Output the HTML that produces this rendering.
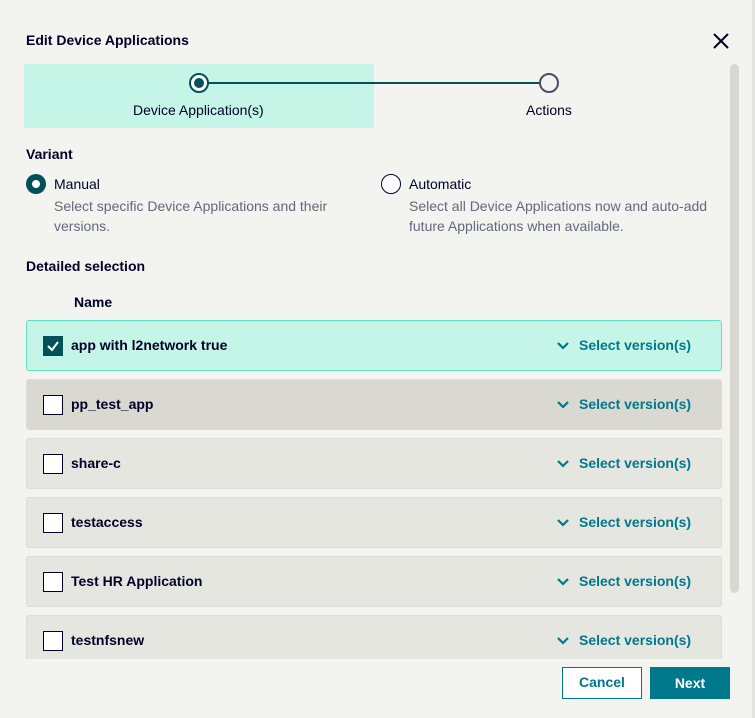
<!DOCTYPE html>
<html><head><style>
*{box-sizing:border-box;margin:0;padding:0}
body{width:755px;height:718px;background:#f3f3ef;font-family:"Liberation Sans",sans-serif;color:#000028;position:relative;overflow:hidden}
.edge{position:absolute;right:0;top:0;width:3px;height:718px;background:#e4e4e0}
.a{position:absolute}
.t{font-size:14px}
.row{position:absolute;left:26px;width:696px;height:51px;background:#e6e6e0;border:1px solid #dcdcd6;border-radius:3px}
.row .cb{position:absolute;left:16px;top:15px;width:20px;height:20px;border:1.5px solid #000028;background:#fff}
.row .n{position:absolute;left:44px;top:16px;font-size:14px;font-weight:bold;color:#000028}
.row .sv{position:absolute;left:552px;top:16px;font-size:14px;font-weight:bold;color:#00788c}
.row svg{position:absolute;left:530px;top:20px}
</style></head><body>
<div class="edge"></div>
<div class="a" style="left:26px;top:32px;font-size:14px;font-weight:bold">Edit Device Applications</div>
<svg class="a" style="left:712px;top:32px" width="18" height="18"><path d="M2 2L16 16M16 2L2 16" stroke="#000028" stroke-width="2"/></svg>
<div class="a" style="left:730px;top:64px;width:9px;height:529px;background:#d8d7d0;border-radius:5px"></div>
<div class="a" style="left:24px;top:64px;width:350px;height:64px;background:#c5f5e6"></div>
<div class="a" style="left:205px;top:82px;width:344px;height:2px;background:#005159"></div>
<div class="a" style="left:189px;top:73px;width:20px;height:20px;border-radius:50%;border:2px solid #005159;background:#fff"></div>
<div class="a" style="left:194px;top:78px;width:10px;height:10px;border-radius:50%;background:#005159"></div>
<div class="a" style="left:539px;top:73px;width:20px;height:20px;border-radius:50%;border:2px solid #4c4c68;background:#f3f3ef"></div>
<div class="a t" style="left:133px;top:102px;">Device Application(s)</div>
<div class="a t" style="left:526px;top:102px;">Actions</div>
<div class="a t" style="left:26px;top:146px;font-weight:bold">Variant</div>
<div class="a" style="left:26px;top:174px;width:20px;height:20px;border-radius:50%;background:#005159"></div>
<div class="a" style="left:32px;top:180px;width:8px;height:8px;border-radius:50%;background:#fff"></div>
<div class="a t" style="left:54px;top:176px">Manual</div>
<div class="a t" style="left:54px;top:196px;color:#66667e;line-height:20px">Select specific Device Applications and their<br>versions.</div>
<div class="a" style="left:381px;top:174px;width:20px;height:20px;border-radius:50%;border:1.5px solid #000028;background:#fff"></div>
<div class="a t" style="left:409px;top:176px">Automatic</div>
<div class="a t" style="left:409px;top:196px;color:#66667e;line-height:20px">Select all Device Applications now and auto-add<br>future Applications when available.</div>
<div class="a t" style="left:26px;top:258px;font-weight:bold">Detailed selection</div>
<div class="a t" style="left:74px;top:294px;font-weight:bold">Name</div>
<div style="position:absolute;left:0;top:0;width:755px;height:659px;overflow:hidden">
<div class="row" style="top:320px;background:#c5f5e6;border-color:#5fe2c0"><div class="cb" style="background:#005159;border-color:#005159"><svg style="left:2px;top:2px" width="14" height="14"><path d="M2 7L6 11L12 3" stroke="#fff" stroke-width="2" fill="none"/></svg></div><div class="n">app with l2network true</div><svg width="12" height="10"><path d="M1 2L6 7L11 2" stroke="#00788c" stroke-width="2.2" fill="none"/></svg><div class="sv">Select version(s)</div></div>
<div class="row" style="top:379px;background:#d9d8d1"><div class="cb"></div><div class="n">pp_test_app</div><svg width="12" height="10"><path d="M1 2L6 7L11 2" stroke="#00788c" stroke-width="2.2" fill="none"/></svg><div class="sv">Select version(s)</div></div>
<div class="row" style="top:438px"><div class="cb"></div><div class="n">share-c</div><svg width="12" height="10"><path d="M1 2L6 7L11 2" stroke="#00788c" stroke-width="2.2" fill="none"/></svg><div class="sv">Select version(s)</div></div>
<div class="row" style="top:497px"><div class="cb"></div><div class="n">testaccess</div><svg width="12" height="10"><path d="M1 2L6 7L11 2" stroke="#00788c" stroke-width="2.2" fill="none"/></svg><div class="sv">Select version(s)</div></div>
<div class="row" style="top:556px"><div class="cb"></div><div class="n">Test HR Application</div><svg width="12" height="10"><path d="M1 2L6 7L11 2" stroke="#00788c" stroke-width="2.2" fill="none"/></svg><div class="sv">Select version(s)</div></div>
<div class="row" style="top:615px"><div class="cb"></div><div class="n">testnfsnew</div><svg width="12" height="10"><path d="M1 2L6 7L11 2" stroke="#00788c" stroke-width="2.2" fill="none"/></svg><div class="sv">Select version(s)</div></div>
</div>
<div class="a" style="left:562px;top:667px;width:80px;height:32px;border:1.5px solid #00788c;background:#fff;color:#00788c;font-size:14px;font-weight:bold;text-align:center;line-height:29px">Cancel</div>
<div class="a" style="left:650px;top:667px;width:80px;height:32px;background:#00788c;color:#fff;font-size:14px;font-weight:bold;text-align:center;line-height:32px">Next</div>
</body></html>
